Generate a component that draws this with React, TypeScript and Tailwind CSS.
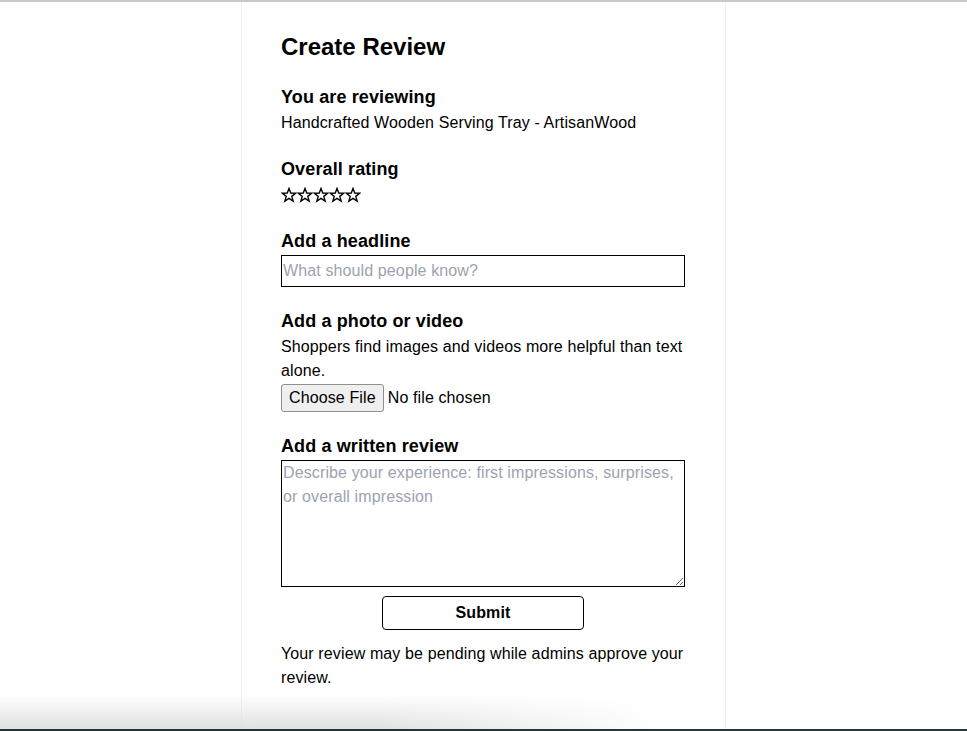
import { useState } from 'react';

const StarIcon = ({ filled }: { filled: boolean }) => (
  <svg viewBox="0 0 24 24" className="h-[16px] w-[16px]" fill={filled ? 'black' : 'none'} stroke="black" strokeWidth={2.1} strokeLinejoin="miter">
    <path d="M12 2.2l2.6 6.9 7.3.3-5.7 4.6 2 7.1L12 17l-6.2 4.1 2-7.1-5.7-4.6 7.3-.3z" />
  </svg>
);

const Stars = () => {
  const [rating, setRating] = useState(0);
  return (
    <div className="flex h-6 items-center">
      {[1, 2, 3, 4, 5].map((n) => (
        <button key={n} type="button" onClick={() => setRating(n)} className="w-4">
          <StarIcon filled={n <= rating} />
        </button>
      ))}
    </div>
  );
};

const Section = ({ title, children }: { title: string; children: React.ReactNode }) => (
  <div className="mt-5">
    <h2 className="text-lg font-bold leading-7 text-black">{title}</h2>
    {children}
  </div>
);

export default function App() {
  return (
    <div className="relative min-h-screen bg-white font-['Liberation_Sans',Arial,sans-serif] text-base tracking-[0.12px] text-black">
      <div className="h-[2px] bg-[#c9c9c9]" />
      <div className="mx-auto min-h-[729px] w-[485px] border-x border-[#f1f1f1] pt-[29px] pr-10 pb-10 pl-[39px]">
        <h1 className="text-2xl font-bold leading-8 tracking-normal">Create Review</h1>

        <Section title="You are reviewing">
          <p className="leading-6">Handcrafted Wooden Serving Tray - ArtisanWood</p>
        </Section>

        <Section title="Overall rating">
          <Stars />
        </Section>

        <Section title="Add a headline">
          <input
            type="text"
            placeholder="What should people know?"
            className="block h-8 w-full border border-black px-px text-base placeholder:text-[#9ca3af] focus:outline-none"
          />
        </Section>

        <Section title="Add a photo or video">
          <p className="leading-6">Shoppers find images and videos more helpful than text alone.</p>
          <div className="mt-px flex items-center gap-1">
            <button
              type="button"
              className="h-7 rounded-[3px] border border-[#8f8f8f] bg-[#efefef] px-[7px] text-base"
            >
              Choose File
            </button>
            <span>No file chosen</span>
          </div>
        </Section>

        <Section title="Add a written review">
          <textarea
            placeholder="Describe your experience: first impressions, surprises, or overall impression"
            className="block h-[127px] w-full border border-black px-px text-base leading-6 placeholder:text-[#9ca3af] focus:outline-none"
          />
        </Section>

        <div className="mt-[9px] flex justify-center">
          <button
            type="submit"
            className="h-[34px] w-[202px] rounded border border-black bg-white text-base font-bold"
          >
            Submit
          </button>
        </div>

        <p className="mt-3 leading-6">Your review may be pending while admins approve your review.</p>
      </div>

      {/* window bottom edge from the screenshot */}
      <div className="pointer-events-none absolute inset-x-0 top-[694px] h-[37px]">
        <div className="h-[35px] w-[700px] bg-gradient-to-b from-white/0 to-[#dedede]/90 [mask-image:linear-gradient(to_right,black_55%,transparent_95%)]" />
        <div className="h-[2px] bg-[#23363a]" />
      </div>
    </div>
  );
}
